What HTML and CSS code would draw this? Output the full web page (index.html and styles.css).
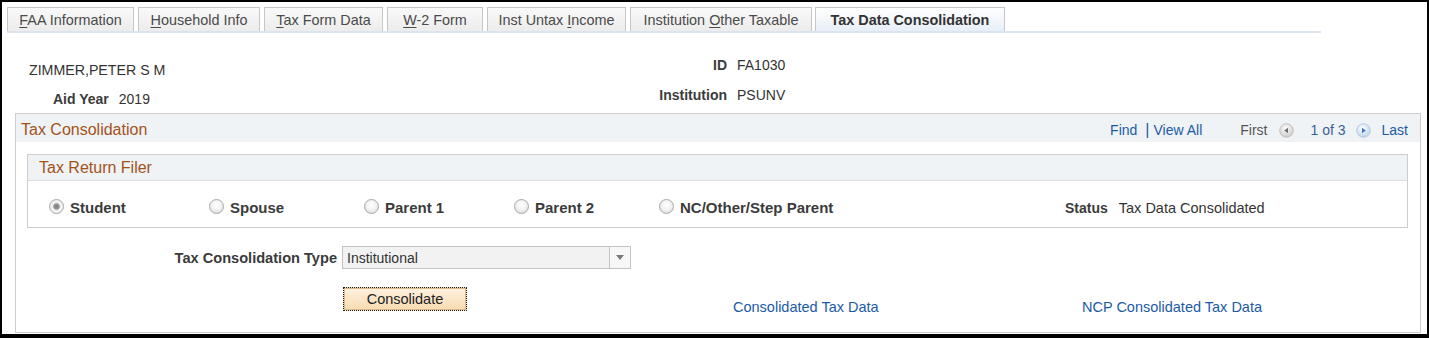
FILE: index.html
```html
<!DOCTYPE html>
<html>
<head>
<meta charset="utf-8">
<link rel="stylesheet" href="styles.css">
</head>
<body>
<div class="page">
  <div class="tabbar">
    <div class="tab w1"><u>F</u>AA Information</div>
    <div class="tab w2"><u>H</u>ousehold Info</div>
    <div class="tab w3"><u>T</u>ax Form Data</div>
    <div class="tab w4"><u>W</u>-2 Form</div>
    <div class="tab w5">Inst Untax <u>I</u>ncome</div>
    <div class="tab w6">Institution <u>O</u>ther Taxable</div>
    <div class="tab active w7">Tax Data Consolidation</div>
  </div>

  <div class="info">
    <div class="info-left">
      <div class="name">ZIMMER,PETER S M</div>
      <div class="aid"><span class="lbl">Aid Year</span><span class="val">2019</span></div>
    </div>
    <div class="info-right">
      <span class="lbl r">ID</span><span class="val">FA1030</span>
      <span class="lbl r">Institution</span><span class="val">PSUNV</span>
    </div>
  </div>

  <div class="box">
    <div class="box-head">
      <span class="title">Tax Consolidation</span>
      <div class="nav">
        <span class="link">Find</span><span class="sep">|</span><span class="link">View All</span>
        <span class="first">First</span>
        <svg class="arr" width="15" height="15" viewBox="0 0 15 15">
          <defs><radialGradient id="g1" cx="45%" cy="35%" r="70%"><stop offset="0" stop-color="#ffffff"/><stop offset="1" stop-color="#c6c6c6"/></radialGradient></defs>
          <circle cx="7.5" cy="7.5" r="6.8" fill="url(#g1)" stroke="#c0c0c0"/>
          <path d="M5.2 7.5 L9 4.8 L9 10.2 Z" fill="#6e6e6e"/>
        </svg>
        <span class="count">1 of 3</span>
        <svg class="arr arr2" width="15" height="15" viewBox="0 0 15 15">
          <defs><radialGradient id="g2" cx="45%" cy="35%" r="70%"><stop offset="0" stop-color="#ffffff"/><stop offset="1" stop-color="#b9d0ec"/></radialGradient></defs>
          <circle cx="7.5" cy="7.5" r="6.8" fill="url(#g2)" stroke="#b5c9e2"/>
          <path d="M9.8 7.5 L6 4.8 L6 10.2 Z" fill="#3f78c0"/>
        </svg>
        <span class="link">Last</span>
      </div>
    </div>

    <div class="inner">
      <div class="inner-head">Tax Return Filer</div>
      <div class="radios">
        <div class="ropt c1"><span class="radio checked"></span><span class="lbl big">Student</span></div>
        <div class="ropt c2"><span class="radio"></span><span class="lbl big">Spouse</span></div>
        <div class="ropt c3"><span class="radio"></span><span class="lbl big">Parent 1</span></div>
        <div class="ropt c4"><span class="radio"></span><span class="lbl big">Parent 2</span></div>
        <div class="ropt c5"><span class="radio"></span><span class="lbl big">NC/Other/Step Parent</span></div>
        <div class="status"><span class="lbl">Status</span><span class="val wide">Tax Data Consolidated</span></div>
      </div>
    </div>

    <div class="typerow">
      <span class="lbl type-lbl">Tax Consolidation Type</span>
      <div class="select">
        <span class="sel-text">Institutional</span>
        <span class="sel-btn"><span class="tri"></span></span>
      </div>
    </div>

    <div class="btnrow">
      <div class="btn">Consolidate</div>
      <span class="link lk">Consolidated Tax Data</span>
      <span class="link lk">NCP Consolidated Tax Data</span>
    </div>
  </div>
</div>
</body>
</html>
```
FILE: styles.css
```css
html, body {
  margin: 0;
  padding: 0;
  background: #000;
}
body {
  font-family: "Liberation Sans", Arial, sans-serif;
  font-size: 14px;
  color: #333;
}
.page {
  background: #fff;
  margin: 2px 2px 0 2px;
  height: 332px;
  overflow: hidden;
  box-sizing: border-box;
}
u { text-decoration: underline; text-underline-offset: 2px; }

/* tabs */
.tabbar {
  display: flex;
  gap: 4px;
  margin: 5px 0 0 5px;
  width: 1314px;
  border-bottom: 2px solid #dbe4ef;
  height: 24px;
}
.tab {
  box-sizing: border-box;
  height: 24px;
  line-height: 25px;
  font-size: 14.4px;
  border: 1px solid #c6c6c6;
  border-bottom: none;
  background: linear-gradient(#f9f9f9, #ececec);
  color: #4a4a4a;
  text-align: center;
  white-space: nowrap;
}
.w1 { width: 127px; }
.w2 { width: 122px; }
.w3 { width: 119px; }
.w4 { width: 96px; }
.w5 { width: 139px; }
.w6 { width: 182px; margin-right: -1px; }
.w7 { width: 190px; }
.tab.active {
  background: linear-gradient(#ffffff, #e7eef7);
  font-weight: bold;
  color: #333;
}

/* info */
.lbl { font-weight: bold; color: #3b3b3b; }
.val { color: #333; }
.info {
  display: flex;
  height: 75px;
  line-height: 18px;
}
.info-left {
  width: 554px;
  box-sizing: border-box;
  padding: 28px 0 0 27px;
}
.name { height: 18px; margin-bottom: 11px; font-size: 14.2px; }
.aid { padding-left: 24px; display: flex; gap: 10px; }
.info-right {
  padding-top: 23px;
  display: grid;
  grid-template-columns: 171px auto;
  column-gap: 10px;
  row-gap: 12px;
  align-content: start;
}
.r { text-align: right; }

/* section box */
.box {
  margin: 5px 0 0 13px;
  width: 1406px;
  box-sizing: border-box;
  border: 1px solid #cdcdcd;
  padding-bottom: 16px;
}
.box-head {
  background: #f0f3f5;
  padding: 6px 12px 3px 5px;
  line-height: 18px;
  display: flex;
  justify-content: space-between;
  align-items: center;
}
.title {
  font-size: 16px;
  color: #a3521a;
}
.nav {
  display: flex;
  align-items: center;
  padding-top: 1px;
}
.link { color: #1c5aa6; }
.nav .link:first-child { margin-left: -3px; }
.sep { color: #1c5aa6; margin: 0 4px 0 8px; font-size: 16px; }
.first { color: #555; margin-left: 38px; margin-right: 11px; }
.arr { display: block; }
.count { color: #3a5f98; margin: 0 10px 0 17px; }
.arr2 { margin-right: 11px; }

.inner {
  margin: 12px 12px 0 11px;
  border: 1px solid #cdcdcd;
}
.inner-head {
  background: #f0f3f5;
  border-bottom: 1px solid #dedede;
  font-size: 16px;
  color: #a3521a;
  line-height: 18px;
  padding: 4px 11px 3px 11px;
}
.radios {
  display: flex;
  align-items: center;
  padding: 18px 0 10px 21px;
  line-height: 18px;
}
.ropt { display: flex; align-items: center; }
.big { font-size: 15px; }
.wide { font-size: 14.5px; }
.c1 { width: 160px; }
.c2 { width: 155px; }
.c3 { width: 150px; }
.c4 { width: 145px; }
.c5 { width: 406px; }
.radio {
  width: 15px;
  height: 15px;
  box-sizing: border-box;
  border-radius: 50%;
  border: 1px solid #a9a9a9;
  background: radial-gradient(circle at 50% 40%, #ffffff 0, #f3f3f3 45%, #d2d2d2 100%);
  margin-right: 6px;
  margin-top: -3px;
}
.radio.checked {
  background: radial-gradient(circle at 50% 50%, #7d7d7d 0, #999 2.8px, #e6e6e6 3.6px, #f6f6f6 5px, #d2d2d2 100%);
}
.status { display: flex; gap: 11px; }

/* type row */
.typerow {
  display: flex;
  align-items: center;
  margin-top: 18px;
}
.type-lbl {
  width: 321px;
  text-align: right;
  margin-right: 5px;
  font-size: 14.6px;
}
.select {
  width: 289px;
  height: 23px;
  box-sizing: border-box;
  border: 1px solid #c3c3c3;
  background: #f2f2f2;
  display: flex;
  align-items: center;
}
.sel-text { flex: 1; padding-left: 4px; color: #333; }
.sel-btn {
  width: 20px;
  height: 21px;
  border-left: 1px solid #c3c3c3;
  display: flex;
  align-items: center;
  justify-content: center;
  background: #f7f7f7;
}
.tri {
  width: 0;
  height: 0;
  border-left: 4px solid transparent;
  border-right: 4px solid transparent;
  border-top: 5px solid #7a7a7a;
}

/* button row */
.btnrow {
  display: grid;
  grid-template-columns: 327px 390px 349px auto;
  margin-top: 18px;
  align-items: start;
}
.btn {
  grid-column: 2;
  width: 124px;
  height: 24px;
  box-sizing: border-box;
  border: 1px dotted #1a1a1a;
  box-shadow: inset 0 0 0 1px #d9b98c;
  background: linear-gradient(#fdf1df, #f8dcb2);
  text-align: center;
  line-height: 22px;
  font-size: 14.5px;
  color: #222;
}
.lk { padding-top: 11px; line-height: 18px; font-size: 14.5px; }
```
